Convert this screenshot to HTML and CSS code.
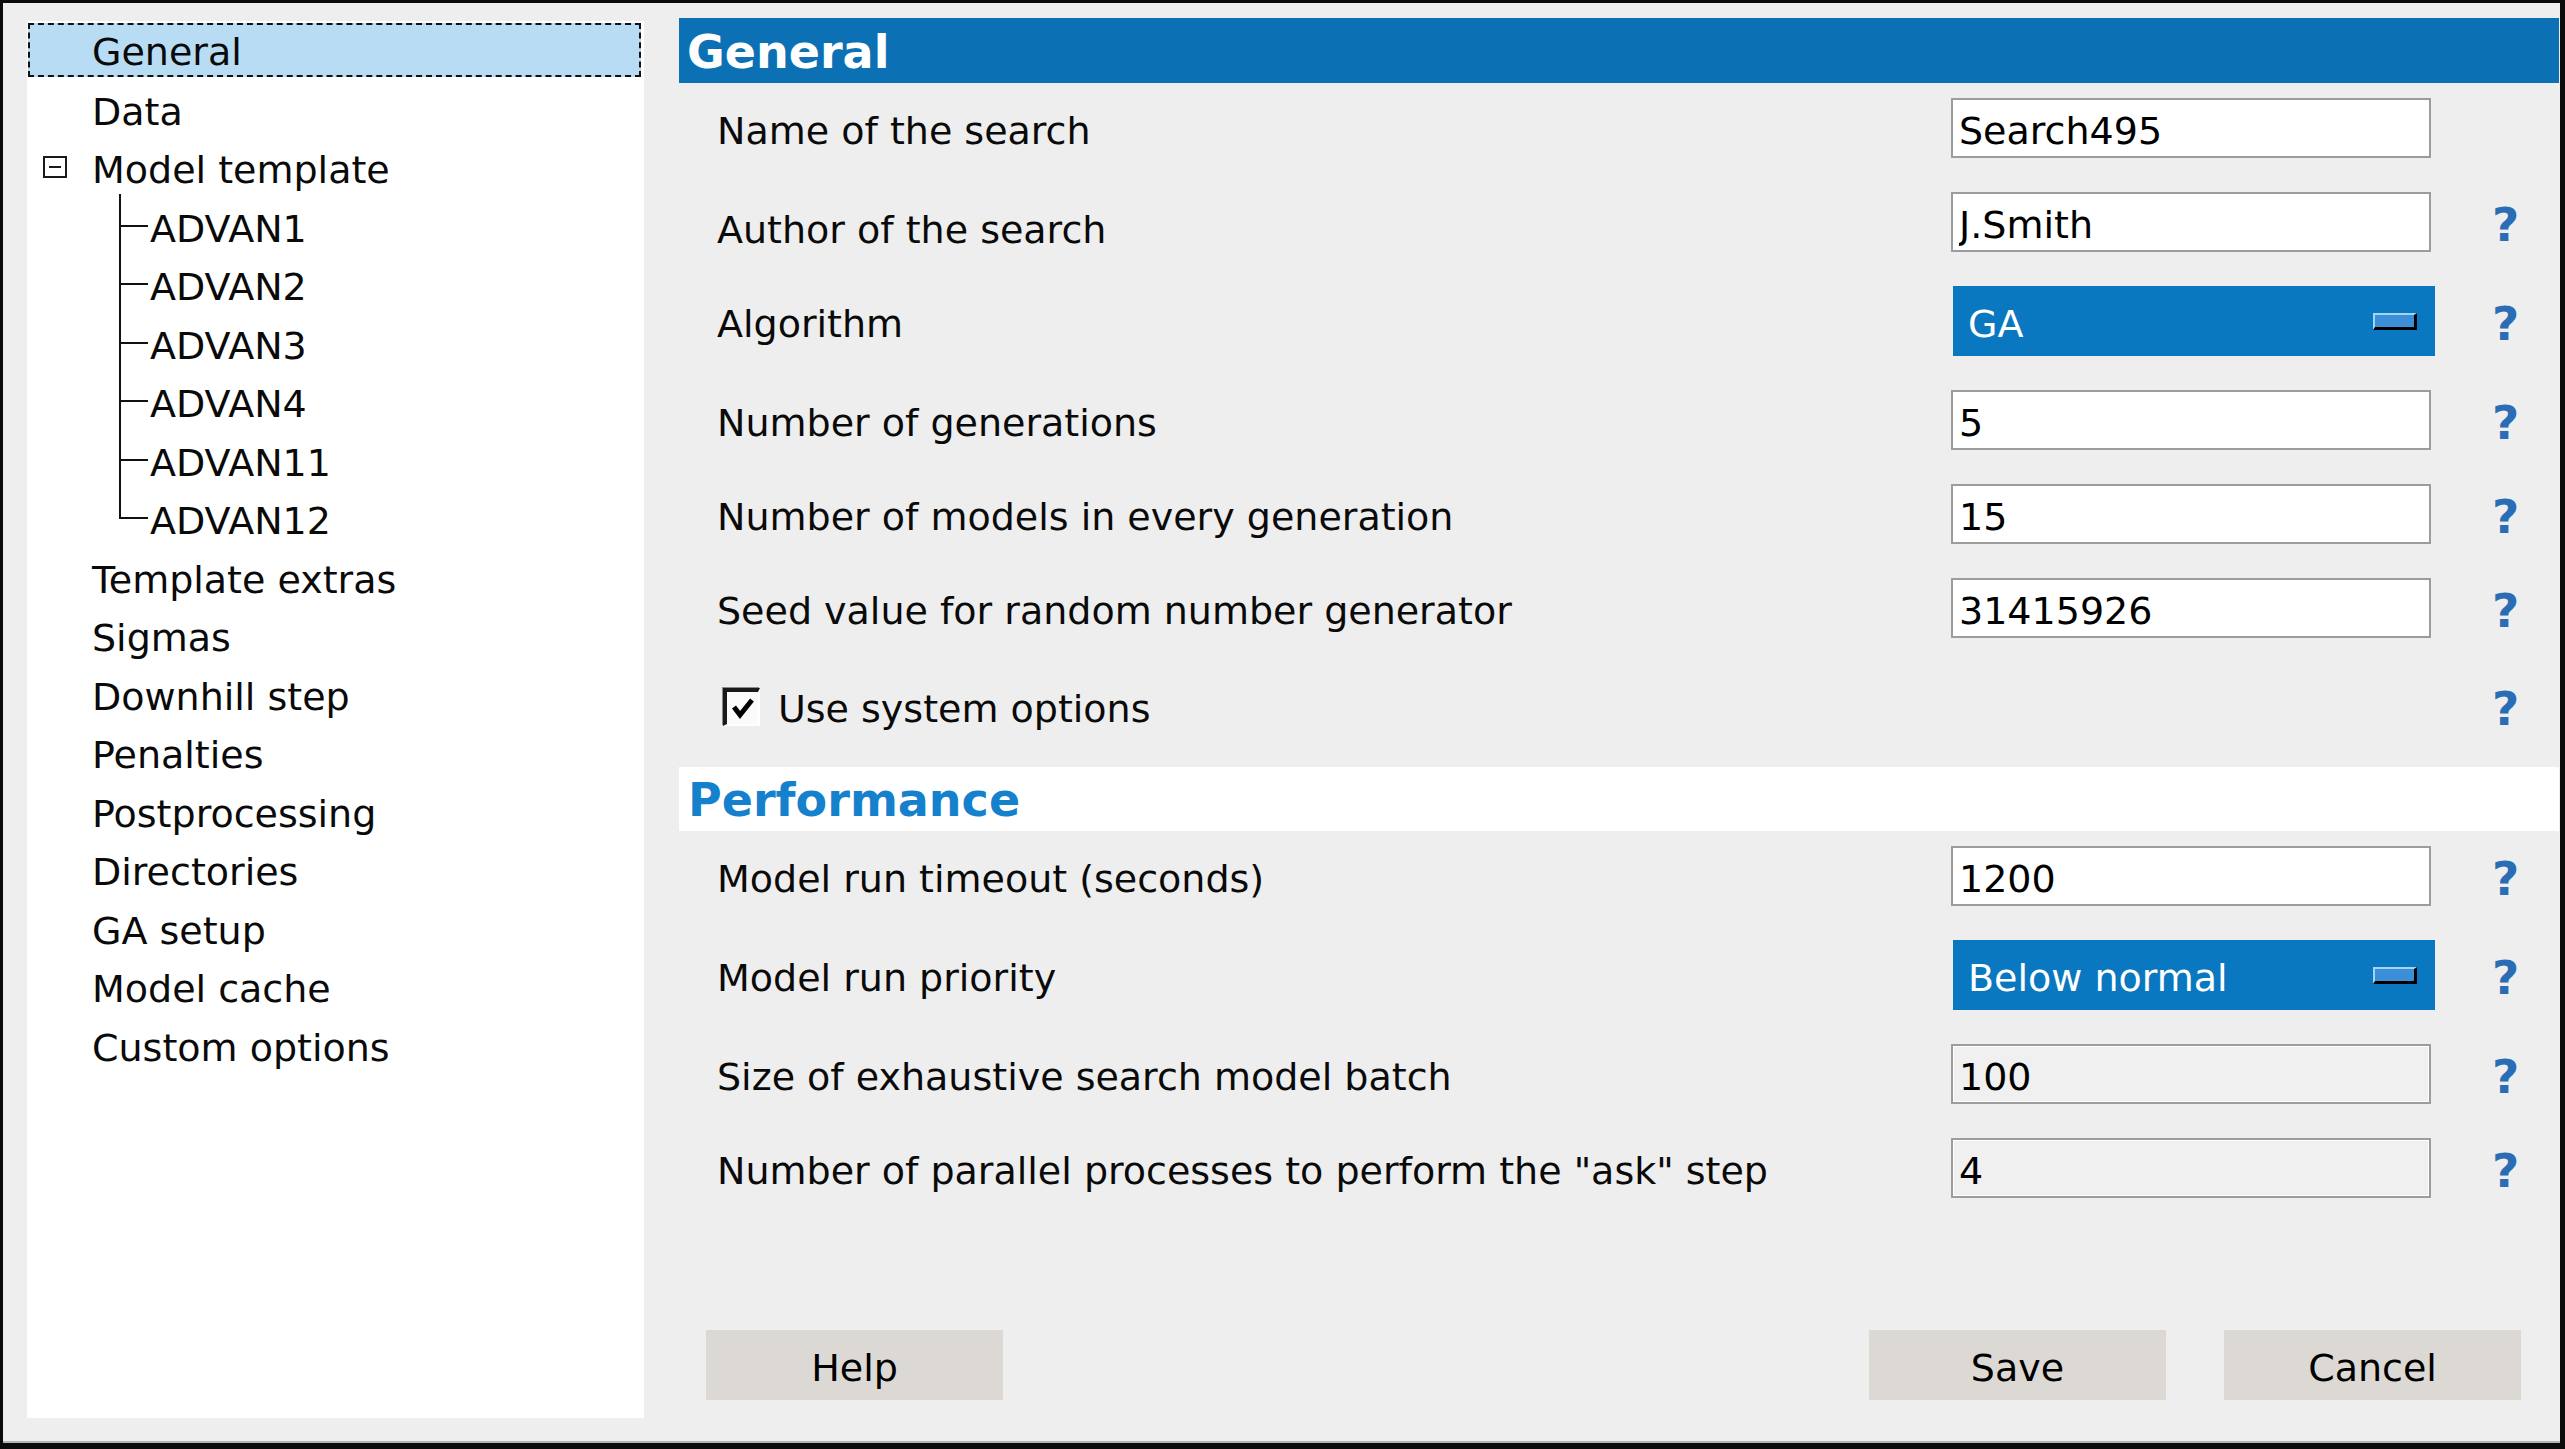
FILE: index.html
```html
<!DOCTYPE html>
<html lang="en">
<head>
<meta charset="utf-8">
<title>Search settings</title>
<link rel="stylesheet" href="styles.css">
</head>
<body>
<div class="window">
  <ul class="tree">
    <li class="sel">General</li>
    <li>Data</li>
    <li class="parent"><svg class="minus" width="24" height="22" viewBox="0 0 24 22"><rect x="1" y="1" width="22" height="20" fill="#fff" stroke="#1a1a1a" stroke-width="2"/><line x1="6" y1="11" x2="18" y2="11" stroke="#1a1a1a" stroke-width="2"/></svg>Model template</li>
    <li class="child">ADVAN1</li>
    <li class="child">ADVAN2</li>
    <li class="child">ADVAN3</li>
    <li class="child">ADVAN4</li>
    <li class="child">ADVAN11</li>
    <li class="child last">ADVAN12</li>
    <li>Template extras</li>
    <li>Sigmas</li>
    <li>Downhill step</li>
    <li>Penalties</li>
    <li>Postprocessing</li>
    <li>Directories</li>
    <li>GA setup</li>
    <li>Model cache</li>
    <li>Custom options</li>
  </ul>

  <div class="main">
    <div class="hdr">General</div>

    <div class="row first">
      <span class="label">Name of the search</span>
      <input class="field" type="text" value="Search495" readonly>
      <span class="help"></span>
    </div>
    <div class="row">
      <span class="label low">Author of the search</span>
      <input class="field" type="text" value="J.Smith" readonly>
      <span class="help">?</span>
    </div>
    <div class="row tall">
      <span class="label">Algorithm</span>
      <div class="select"><span class="sel-text">GA</span><span class="drop"></span></div>
      <span class="help">?</span>
    </div>
    <div class="row">
      <span class="label">Number of generations</span>
      <input class="field" type="text" value="5" readonly>
      <span class="help">?</span>
    </div>
    <div class="row">
      <span class="label">Number of models in every generation</span>
      <input class="field" type="text" value="15" readonly>
      <span class="help">?</span>
    </div>
    <div class="row">
      <span class="label">Seed value for random number generator</span>
      <input class="field" type="text" value="31415926" readonly>
      <span class="help">?</span>
    </div>
    <div class="row check">
      <span class="label chk-label"><span class="box"><svg width="26" height="26" viewBox="0 0 26 26"><polyline points="4,12 10,20 22,5" fill="none" stroke="#000" stroke-width="5"/></svg></span>Use system options</span>
      <span></span>
      <span class="help">?</span>
    </div>

    <div class="hdr light">Performance</div>

    <div class="row first">
      <span class="label">Model run timeout (seconds)</span>
      <input class="field" type="text" value="1200" readonly>
      <span class="help">?</span>
    </div>
    <div class="row tall">
      <span class="label">Model run priority</span>
      <div class="select"><span class="sel-text">Below normal</span><span class="drop"></span></div>
      <span class="help">?</span>
    </div>
    <div class="row">
      <span class="label">Size of exhaustive search model batch</span>
      <input class="field dim" type="text" value="100" readonly>
      <span class="help">?</span>
    </div>
    <div class="row">
      <span class="label">Number of parallel processes to perform the "ask" step</span>
      <input class="field dim" type="text" value="4" readonly>
      <span class="help">?</span>
    </div>

    <div class="buttons">
      <button class="btn" type="button">Help</button>
      <span class="spacer"></span>
      <button class="btn" type="button">Save</button>
      <button class="btn" type="button">Cancel</button>
    </div>
  </div>
</div>
</body>
</html>
```

FILE: styles.css
```css
* { box-sizing: border-box; }
html, body { margin: 0; padding: 0; }
body {
  width: 2565px;
  height: 1449px;
  overflow: hidden;
  background: #eeeeee;
  font-family: "DejaVu Sans", Verdana, sans-serif;
  font-size: 38px;
  color: #0a0a0a;
}
.window {
  width: 2565px;
  height: 1449px;
  border: 3px solid #0b0b0b;
  border-right-width: 5px;
  border-bottom-width: 6px;
  padding: 15px 1px 25px 24px;
  display: grid;
  grid-template-columns: 617px 1880px;
  column-gap: 35px;
  background: #eeeeee;
  box-shadow: inset 0 -2px 0 #b4b4b4;
}

/* tree */
.tree {
  list-style: none;
  margin: 3px 0 0 0;
  padding: 2px 0 0 0;
  background: #ffffff;
}
.tree li {
  height: 54px;
  margin: 0 3px 4.5px 1px;
  padding-left: 64px;
  padding-top: 6px;
  display: flex;
  align-items: center;
  position: relative;
  white-space: nowrap;
}
.tree li.sel {
  background: #b8dcf3;
  border: 2px dashed #111;
  padding-left: 62px;
  padding-top: 4px;
}
.tree li.parent { padding-left: 15px; }
.tree li.parent .minus { margin-right: 25px; flex: none; position: relative; top: -3px; }
.tree li.child { padding-left: 122px; }
.tree li.child::before {
  content: "";
  position: absolute;
  left: 91px;
  top: -4.5px;
  width: 2px;
  height: calc(100% + 4.5px);
  background: #111;
}
.tree li.child.last::before { height: calc(50% + 5.5px); }
.tree li.child::after {
  content: "";
  position: absolute;
  left: 91px;
  top: calc(50% - 1px);
  width: 29px;
  height: 2px;
  background: #111;
}

/* main panel */
.main {
  display: flex;
  flex-direction: column;
}
.hdr {
  height: 65px;
  flex: none;
  background: #0b71b4;
  color: #ffffff;
  font-weight: bold;
  font-size: 46px;
  padding-left: 8px;
  padding-top: 3px;
  display: flex;
  align-items: center;
}
.hdr.light {
  height: 64px;
  background: #ffffff;
  color: #1581cc;
  padding-left: 9px;
  padding-top: 1px;
  margin-top: 31px;
}
.row {
  display: grid;
  grid-template-columns: 1fr 480px 128px;
  align-items: center;
  height: 60px;
  flex: none;
  margin-top: 34px;
}
.row.first { margin-top: 15px; }
.row.tall { height: 70px; }
.row.check { margin-top: 38px; }
.label {
  padding-left: 38px;
  white-space: nowrap;
  position: relative;
  top: 3px;
}
.label.low { top: 8px; }
.field {
  width: 480px;
  height: 60px;
  border: 2px solid #9c9c9c;
  background: #ffffff;
  font: inherit;
  color: #000;
  padding: 6px 0 0 6px;
  margin: 0;
  outline: none;
}
.field.dim {
  background: #f0f0f0;
  box-shadow: inset 0 0 0 1px #ffffff;
}
.select {
  width: 482px;
  height: 70px;
  margin-left: 2px;
  background: #0a78c0;
  color: #ffffff;
  display: flex;
  align-items: center;
  justify-content: space-between;
  padding: 0 18px 0 15px;
}
.sel-text { position: relative; top: 3px; }
.drop {
  width: 44px;
  height: 17px;
  background: #3a8fd8;
  border-top: 2px solid #a6d4f8;
  border-left: 2px solid #a6d4f8;
  border-right: 3px solid #000;
  border-bottom: 3px solid #000;
}
.help {
  padding-left: 61px;
  font-weight: bold;
  font-size: 47px;
  color: #2a6db5;
  line-height: 1;
  position: relative;
  top: 2px;
}
.chk-label {
  display: flex;
  align-items: center;
}
.box {
  width: 37px;
  height: 38px;
  margin-left: 6px;
  margin-right: 18px;
  background: #fbfbfb;
  border-top: 4px solid #1a1a1a;
  border-left: 4px solid #1a1a1a;
  border-right: 2px solid #ffffff;
  border-bottom: 2px solid #ffffff;
  box-shadow: -1px -1px 0 #8a8a8a;
  display: flex;
  align-items: center;
  justify-content: center;
  position: relative;
  top: -2px;
}

/* buttons */
.buttons {
  margin-top: auto;
  margin-bottom: 18px;
  display: flex;
  align-items: center;
  gap: 58px;
  padding: 0 38px 0 27px;
}
.spacer { flex: 1; }
.btn {
  width: 297px;
  height: 70px;
  border: none;
  background: #dcd9d5;
  font: inherit;
  color: #000;
  padding: 5px 0 0 0;
}
```
